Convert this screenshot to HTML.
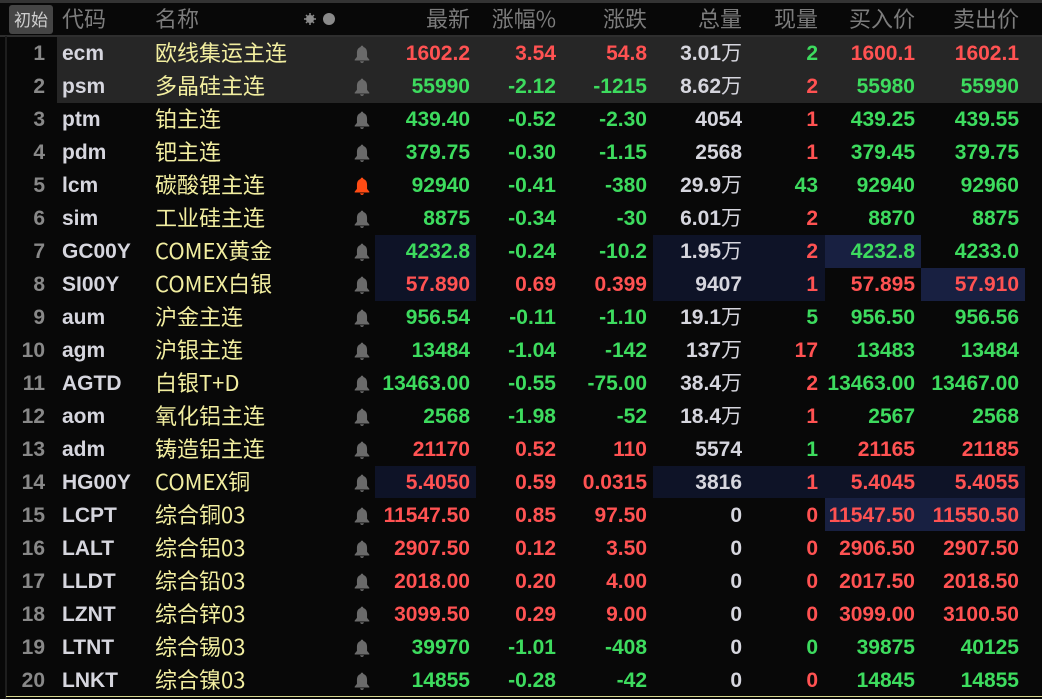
<!DOCTYPE html>
<html><head><meta charset="utf-8"><style>
*{margin:0;padding:0;box-sizing:border-box}
body{width:1042px;height:699px;background:#080808;overflow:hidden;position:relative;font-family:"Liberation Sans","Noto Sans CJK SC",sans-serif}
.top{position:absolute;left:0;top:0;width:1042px;height:3px;background:#333}
.hl{position:absolute;left:0;top:35px;width:1042px;height:2px;background:#2e2e2e}
.vl{position:absolute;left:5px;top:36px;width:2px;height:663px;background:#1e1e1e}
.bl{position:absolute;left:6px;top:696px;width:1036px;height:1px;background:#d8d890}
.btn{position:absolute;left:9px;top:5px;width:44px;height:29px;background:#454545;border-radius:3px;color:#cfcfcf;font-size:17px;line-height:27px;text-align:center;font-family:"Noto Sans CJK SC",sans-serif}
.h{position:absolute;top:4px;height:30px;line-height:28px;color:#7c7c7c;font-size:22px;font-family:"Noto Sans CJK SC",sans-serif;white-space:nowrap}
.hr{text-align:right}
.bg{position:absolute}
.r{position:absolute;left:0;width:1042px;height:33px;font-size:21px;font-weight:bold;line-height:33px}
.r span{position:absolute;white-space:nowrap;top:0}
.n{right:997px;color:#888;font-weight:bold}
.c{left:62px;color:#d6d6de}
.m{left:155px;color:#f2eea0;font-weight:normal;font-size:22px;line-height:30px;font-family:"Noto Sans CJK SC",sans-serif}
.b{position:absolute;left:354px;top:8px;width:16px;height:18px}
.v1{right:572px}.v2{right:486px}.v3{right:395px}.v4{right:300px;color:#d6d6de}.v5{right:224px}.v6{right:127px}.v7{right:23px}
.R{color:#ff5252}.G{color:#3ddb5e}
.w{font-weight:normal;font-family:"Noto Sans CJK SC",sans-serif;font-size:21px;line-height:30px;vertical-align:top}
</style></head><body>
<div class="top"></div>
<div class="btn">初始</div>
<div class="h" style="left:62px">代码</div>
<div class="h" style="left:155px">名称</div>
<svg style="position:absolute;left:303px;top:12px" width="32" height="14"><g fill="#8a8a8a"><circle cx="7" cy="7" r="4"/><path d="M7 1v12M1 7h12M3 3l8 8M11 3l-8 8" stroke="#8a8a8a" stroke-width="1.5"/><circle cx="26" cy="7" r="6"/></g></svg>
<div class="h hr" style="right:572px">最新</div>
<div class="h hr" style="right:486px">涨幅%</div>
<div class="h hr" style="right:395px">涨跌</div>
<div class="h hr" style="right:300px">总量</div>
<div class="h hr" style="right:224px">现量</div>
<div class="h hr" style="right:127px">买入价</div>
<div class="h hr" style="right:23px">卖出价</div>
<div class="hl"></div>
<div class="vl"></div>
<div class="bg" style="left:57px;top:37px;width:985px;height:66px;background:#262626"></div>
<div class="bg" style="left:375px;top:235px;width:101px;height:66px;background:#0e1327"></div>
<div class="bg" style="left:653px;top:235px;width:172px;height:66px;background:#0e1327"></div>
<div class="bg" style="left:825px;top:235px;width:96px;height:33px;background:#182041"></div>
<div class="bg" style="left:921px;top:268px;width:104px;height:33px;background:#182041"></div>
<div class="bg" style="left:375px;top:466px;width:101px;height:32px;background:#0e1327"></div>
<div class="bg" style="left:653px;top:466px;width:372px;height:32px;background:#0e1327"></div>
<div class="bg" style="left:825px;top:498px;width:200px;height:33px;background:#182041"></div>
<svg width="0" height="0" style="position:absolute"><defs><path id="bell" d="M7 0.5c0.8 0 1.2 0.6 1.2 1.3C10.6 2.5 11.5 4.5 11.5 7v3.5l2 2.5v0.8H0.5v-0.8l2-2.5V7c0-2.5 0.9-4.5 3.3-5.2C5.8 1.1 6.2 0.5 7 0.5zM5.3 14.4h3.4C8.6 15.3 7.9 16 7 16s-1.6-0.7-1.7-1.6z"/></defs></svg>

<div class="r" style="top:37px"><span class="n">1</span><span class="c">ecm</span><span class="m">欧线集运主连</span><svg class="b" viewBox="0 0 14 16" fill="#6a6a6a"><use href="#bell"/></svg><span class="v1 R">1602.2</span><span class="v2 R">3.54</span><span class="v3 R">54.8</span><span class="v4">3.01<span class="w" style="position:static">万</span></span><span class="v5 G">2</span><span class="v6 R">1600.1</span><span class="v7 R">1602.1</span></div>
<div class="r" style="top:70px"><span class="n">2</span><span class="c">psm</span><span class="m">多晶硅主连</span><svg class="b" viewBox="0 0 14 16" fill="#6a6a6a"><use href="#bell"/></svg><span class="v1 G">55990</span><span class="v2 G">-2.12</span><span class="v3 G">-1215</span><span class="v4">8.62<span class="w" style="position:static">万</span></span><span class="v5 R">2</span><span class="v6 G">55980</span><span class="v7 G">55990</span></div>
<div class="r" style="top:103px"><span class="n">3</span><span class="c">ptm</span><span class="m">铂主连</span><svg class="b" viewBox="0 0 14 16" fill="#6a6a6a"><use href="#bell"/></svg><span class="v1 G">439.40</span><span class="v2 G">-0.52</span><span class="v3 G">-2.30</span><span class="v4">4054</span><span class="v5 R">1</span><span class="v6 G">439.25</span><span class="v7 G">439.55</span></div>
<div class="r" style="top:136px"><span class="n">4</span><span class="c">pdm</span><span class="m">钯主连</span><svg class="b" viewBox="0 0 14 16" fill="#6a6a6a"><use href="#bell"/></svg><span class="v1 G">379.75</span><span class="v2 G">-0.30</span><span class="v3 G">-1.15</span><span class="v4">2568</span><span class="v5 R">1</span><span class="v6 G">379.45</span><span class="v7 G">379.75</span></div>
<div class="r" style="top:169px"><span class="n">5</span><span class="c">lcm</span><span class="m">碳酸锂主连</span><svg class="b" viewBox="0 0 14 16" fill="#ff4b14"><use href="#bell"/></svg><span class="v1 G">92940</span><span class="v2 G">-0.41</span><span class="v3 G">-380</span><span class="v4">29.9<span class="w" style="position:static">万</span></span><span class="v5 G">43</span><span class="v6 G">92940</span><span class="v7 G">92960</span></div>
<div class="r" style="top:202px"><span class="n">6</span><span class="c">sim</span><span class="m">工业硅主连</span><svg class="b" viewBox="0 0 14 16" fill="#6a6a6a"><use href="#bell"/></svg><span class="v1 G">8875</span><span class="v2 G">-0.34</span><span class="v3 G">-30</span><span class="v4">6.01<span class="w" style="position:static">万</span></span><span class="v5 R">2</span><span class="v6 G">8870</span><span class="v7 G">8875</span></div>
<div class="r" style="top:235px"><span class="n">7</span><span class="c">GC00Y</span><span class="m">COMEX黄金</span><svg class="b" viewBox="0 0 14 16" fill="#6a6a6a"><use href="#bell"/></svg><span class="v1 G">4232.8</span><span class="v2 G">-0.24</span><span class="v3 G">-10.2</span><span class="v4">1.95<span class="w" style="position:static">万</span></span><span class="v5 R">2</span><span class="v6 G">4232.8</span><span class="v7 G">4233.0</span></div>
<div class="r" style="top:268px"><span class="n">8</span><span class="c">SI00Y</span><span class="m">COMEX白银</span><svg class="b" viewBox="0 0 14 16" fill="#6a6a6a"><use href="#bell"/></svg><span class="v1 R">57.890</span><span class="v2 R">0.69</span><span class="v3 R">0.399</span><span class="v4">9407</span><span class="v5 R">1</span><span class="v6 R">57.895</span><span class="v7 R">57.910</span></div>
<div class="r" style="top:301px"><span class="n">9</span><span class="c">aum</span><span class="m">沪金主连</span><svg class="b" viewBox="0 0 14 16" fill="#6a6a6a"><use href="#bell"/></svg><span class="v1 G">956.54</span><span class="v2 G">-0.11</span><span class="v3 G">-1.10</span><span class="v4">19.1<span class="w" style="position:static">万</span></span><span class="v5 G">5</span><span class="v6 G">956.50</span><span class="v7 G">956.56</span></div>
<div class="r" style="top:334px"><span class="n">10</span><span class="c">agm</span><span class="m">沪银主连</span><svg class="b" viewBox="0 0 14 16" fill="#6a6a6a"><use href="#bell"/></svg><span class="v1 G">13484</span><span class="v2 G">-1.04</span><span class="v3 G">-142</span><span class="v4">137<span class="w" style="position:static">万</span></span><span class="v5 R">17</span><span class="v6 G">13483</span><span class="v7 G">13484</span></div>
<div class="r" style="top:367px"><span class="n">11</span><span class="c">AGTD</span><span class="m">白银T+D</span><svg class="b" viewBox="0 0 14 16" fill="#6a6a6a"><use href="#bell"/></svg><span class="v1 G">13463.00</span><span class="v2 G">-0.55</span><span class="v3 G">-75.00</span><span class="v4">38.4<span class="w" style="position:static">万</span></span><span class="v5 R">2</span><span class="v6 G">13463.00</span><span class="v7 G">13467.00</span></div>
<div class="r" style="top:400px"><span class="n">12</span><span class="c">aom</span><span class="m">氧化铝主连</span><svg class="b" viewBox="0 0 14 16" fill="#6a6a6a"><use href="#bell"/></svg><span class="v1 G">2568</span><span class="v2 G">-1.98</span><span class="v3 G">-52</span><span class="v4">18.4<span class="w" style="position:static">万</span></span><span class="v5 R">1</span><span class="v6 G">2567</span><span class="v7 G">2568</span></div>
<div class="r" style="top:433px"><span class="n">13</span><span class="c">adm</span><span class="m">铸造铝主连</span><svg class="b" viewBox="0 0 14 16" fill="#6a6a6a"><use href="#bell"/></svg><span class="v1 R">21170</span><span class="v2 R">0.52</span><span class="v3 R">110</span><span class="v4">5574</span><span class="v5 G">1</span><span class="v6 R">21165</span><span class="v7 R">21185</span></div>
<div class="r" style="top:466px"><span class="n">14</span><span class="c">HG00Y</span><span class="m">COMEX铜</span><svg class="b" viewBox="0 0 14 16" fill="#6a6a6a"><use href="#bell"/></svg><span class="v1 R">5.4050</span><span class="v2 R">0.59</span><span class="v3 R">0.0315</span><span class="v4">3816</span><span class="v5 R">1</span><span class="v6 R">5.4045</span><span class="v7 R">5.4055</span></div>
<div class="r" style="top:499px"><span class="n">15</span><span class="c">LCPT</span><span class="m">综合铜03</span><svg class="b" viewBox="0 0 14 16" fill="#6a6a6a"><use href="#bell"/></svg><span class="v1 R">11547.50</span><span class="v2 R">0.85</span><span class="v3 R">97.50</span><span class="v4">0</span><span class="v5 R">0</span><span class="v6 R">11547.50</span><span class="v7 R">11550.50</span></div>
<div class="r" style="top:532px"><span class="n">16</span><span class="c">LALT</span><span class="m">综合铝03</span><svg class="b" viewBox="0 0 14 16" fill="#6a6a6a"><use href="#bell"/></svg><span class="v1 R">2907.50</span><span class="v2 R">0.12</span><span class="v3 R">3.50</span><span class="v4">0</span><span class="v5 R">0</span><span class="v6 R">2906.50</span><span class="v7 R">2907.50</span></div>
<div class="r" style="top:565px"><span class="n">17</span><span class="c">LLDT</span><span class="m">综合铅03</span><svg class="b" viewBox="0 0 14 16" fill="#6a6a6a"><use href="#bell"/></svg><span class="v1 R">2018.00</span><span class="v2 R">0.20</span><span class="v3 R">4.00</span><span class="v4">0</span><span class="v5 R">0</span><span class="v6 R">2017.50</span><span class="v7 R">2018.50</span></div>
<div class="r" style="top:598px"><span class="n">18</span><span class="c">LZNT</span><span class="m">综合锌03</span><svg class="b" viewBox="0 0 14 16" fill="#6a6a6a"><use href="#bell"/></svg><span class="v1 R">3099.50</span><span class="v2 R">0.29</span><span class="v3 R">9.00</span><span class="v4">0</span><span class="v5 R">0</span><span class="v6 R">3099.00</span><span class="v7 R">3100.50</span></div>
<div class="r" style="top:631px"><span class="n">19</span><span class="c">LTNT</span><span class="m">综合锡03</span><svg class="b" viewBox="0 0 14 16" fill="#6a6a6a"><use href="#bell"/></svg><span class="v1 G">39970</span><span class="v2 G">-1.01</span><span class="v3 G">-408</span><span class="v4">0</span><span class="v5 G">0</span><span class="v6 G">39875</span><span class="v7 G">40125</span></div>
<div class="r" style="top:664px"><span class="n">20</span><span class="c">LNKT</span><span class="m">综合镍03</span><svg class="b" viewBox="0 0 14 16" fill="#6a6a6a"><use href="#bell"/></svg><span class="v1 G">14855</span><span class="v2 G">-0.28</span><span class="v3 G">-42</span><span class="v4">0</span><span class="v5 R">0</span><span class="v6 G">14845</span><span class="v7 G">14855</span></div>
<div class="bl"></div>
</body></html>
